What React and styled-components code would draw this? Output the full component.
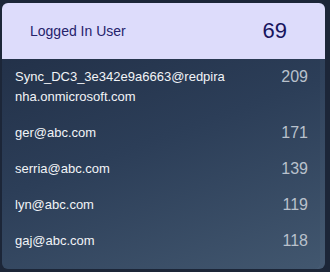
import React from "react";
import styled, { createGlobalStyle } from "styled-components";

const GlobalStyle = createGlobalStyle`
  body {
    margin: 0;
    background: #1c2638;
    font-family: "Liberation Sans", Arial, sans-serif;
  }
`;

const users = [
  { name: "Sync_DC3_3e342e9a6663@redpiranha.onmicrosoft.com", count: 209 },
  { name: "ger@abc.com", count: 171 },
  { name: "serria@abc.com", count: 139 },
  { name: "lyn@abc.com", count: 119 },
  { name: "gaj@abc.com", count: 118 },
];

export default function App() {
  return (
    <>
      <GlobalStyle />
      <Card>
        <Header>
          <Title>Logged In User</Title>
          <Total>69</Total>
        </Header>
        <List>
          {users.map((u) => (
            <Row key={u.name}>
              <Name>{u.name}</Name>
              <Count>{u.count}</Count>
            </Row>
          ))}
        </List>
      </Card>
    </>
  );
}

const Card = styled.div`
  margin: 3px 0 0 2px;
  width: 323px;
  height: 266px;
  border-radius: 6px;
  overflow: hidden;
  display: flex;
  flex-direction: column;
  background: linear-gradient(160deg, #1f2c43 0%, #2c3e58 50%, #42576f 100%);
  box-shadow: inset -5px 0 0 rgba(255, 255, 255, 0.025);
`;

const Header = styled.div`
  height: 56px;
  flex-shrink: 0;
  display: flex;
  align-items: center;
  justify-content: space-between;
  padding: 0 38px 0 28px;
  background: #dddcfb;
`;

const Title = styled.span`
  font-size: 14px;
  color: #25236b;
`;

const Total = styled.span`
  font-size: 22px;
  color: #17155e;
`;

const List = styled.div`
  display: flex;
  flex-direction: column;
`;

const Row = styled.div`
  display: flex;
  justify-content: space-between;
  align-items: flex-start;
  padding: 8px 17px 8px 13px;
  line-height: 20px;
`;

const Name = styled.span`
  width: 214px;
  font-size: 13px;
  color: #f2f4f7;
  word-break: break-all;
`;

const Count = styled.span`
  font-size: 16px;
  color: #b9c1cc;
`;
